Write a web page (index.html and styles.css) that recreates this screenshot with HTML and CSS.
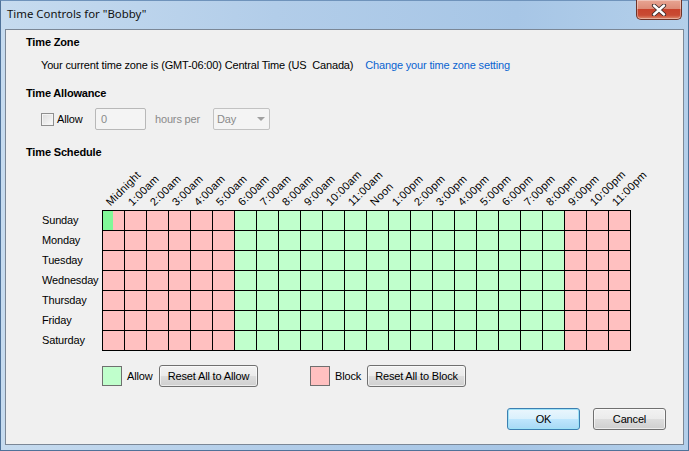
FILE: index.html
```html
<!DOCTYPE html>
<html>
<head>
<meta charset="utf-8">
<link rel="stylesheet" href="styles.css">
</head>
<body>
<div class="window">
  <div class="titlebar">
    <span class="title">Time Controls for "Bobby"</span>
    <div class="close">
      <svg width="20" height="12" viewBox="0 0 20 12"><path d="M5 1.5 L15 10.5 M15 1.5 L5 10.5" stroke="#3a2a2a" stroke-width="4.2" stroke-linecap="round"/><path d="M5 1.5 L15 10.5 M15 1.5 L5 10.5" stroke="#ffffff" stroke-width="2.4" stroke-linecap="round"/></svg>
    </div>
  </div>
  <div class="panel">
    <div class="heading">Time Zone</div>
    <div class="tzline">Your current time zone is (GMT-06:00) Central Time (US&nbsp; Canada)<a class="link">Change your time zone setting</a></div>
    <div class="heading h2">Time Allowance</div>
    <div class="allowrow">
      <span class="checkbox"></span><span class="allowlbl">Allow</span>
      <span class="numbox">0</span>
      <span class="dim">hours per</span>
      <span class="select">Day<span class="arrow"></span></span>
    </div>
    <div class="heading h3">Time Schedule</div>
    <div class="hours">
      <div class="hc"><span>Midnight</span></div>
      <div class="hc"><span>1:00am</span></div>
      <div class="hc"><span>2:00am</span></div>
      <div class="hc"><span>3:00am</span></div>
      <div class="hc"><span>4:00am</span></div>
      <div class="hc"><span>5:00am</span></div>
      <div class="hc"><span>6:00am</span></div>
      <div class="hc"><span>7:00am</span></div>
      <div class="hc"><span>8:00am</span></div>
      <div class="hc"><span>9:00am</span></div>
      <div class="hc"><span>10:00am</span></div>
      <div class="hc"><span>11:00am</span></div>
      <div class="hc"><span>Noon</span></div>
      <div class="hc"><span>1:00pm</span></div>
      <div class="hc"><span>2:00pm</span></div>
      <div class="hc"><span>3:00pm</span></div>
      <div class="hc"><span>4:00pm</span></div>
      <div class="hc"><span>5:00pm</span></div>
      <div class="hc"><span>6:00pm</span></div>
      <div class="hc"><span>7:00pm</span></div>
      <div class="hc"><span>8:00pm</span></div>
      <div class="hc"><span>9:00pm</span></div>
      <div class="hc"><span>10:00pm</span></div>
      <div class="hc"><span>11:00pm</span></div>
    </div>
    <div class="schedule">
      <div class="days">
        <div>Sunday</div><div>Monday</div><div>Tuesday</div><div>Wednesday</div><div>Thursday</div><div>Friday</div><div>Saturday</div>
      </div>
      <div class="grid">
        <div class="c h"></div><div class="c b"></div><div class="c b"></div><div class="c b"></div><div class="c b"></div><div class="c b"></div><div class="c a"></div><div class="c a"></div><div class="c a"></div><div class="c a"></div><div class="c a"></div><div class="c a"></div><div class="c a"></div><div class="c a"></div><div class="c a"></div><div class="c a"></div><div class="c a"></div><div class="c a"></div><div class="c a"></div><div class="c a"></div><div class="c a"></div><div class="c b"></div><div class="c b"></div><div class="c b"></div>
        <div class="c b"></div><div class="c b"></div><div class="c b"></div><div class="c b"></div><div class="c b"></div><div class="c b"></div><div class="c a"></div><div class="c a"></div><div class="c a"></div><div class="c a"></div><div class="c a"></div><div class="c a"></div><div class="c a"></div><div class="c a"></div><div class="c a"></div><div class="c a"></div><div class="c a"></div><div class="c a"></div><div class="c a"></div><div class="c a"></div><div class="c a"></div><div class="c b"></div><div class="c b"></div><div class="c b"></div>
        <div class="c b"></div><div class="c b"></div><div class="c b"></div><div class="c b"></div><div class="c b"></div><div class="c b"></div><div class="c a"></div><div class="c a"></div><div class="c a"></div><div class="c a"></div><div class="c a"></div><div class="c a"></div><div class="c a"></div><div class="c a"></div><div class="c a"></div><div class="c a"></div><div class="c a"></div><div class="c a"></div><div class="c a"></div><div class="c a"></div><div class="c a"></div><div class="c b"></div><div class="c b"></div><div class="c b"></div>
        <div class="c b"></div><div class="c b"></div><div class="c b"></div><div class="c b"></div><div class="c b"></div><div class="c b"></div><div class="c a"></div><div class="c a"></div><div class="c a"></div><div class="c a"></div><div class="c a"></div><div class="c a"></div><div class="c a"></div><div class="c a"></div><div class="c a"></div><div class="c a"></div><div class="c a"></div><div class="c a"></div><div class="c a"></div><div class="c a"></div><div class="c a"></div><div class="c b"></div><div class="c b"></div><div class="c b"></div>
        <div class="c b"></div><div class="c b"></div><div class="c b"></div><div class="c b"></div><div class="c b"></div><div class="c b"></div><div class="c a"></div><div class="c a"></div><div class="c a"></div><div class="c a"></div><div class="c a"></div><div class="c a"></div><div class="c a"></div><div class="c a"></div><div class="c a"></div><div class="c a"></div><div class="c a"></div><div class="c a"></div><div class="c a"></div><div class="c a"></div><div class="c a"></div><div class="c b"></div><div class="c b"></div><div class="c b"></div>
        <div class="c b"></div><div class="c b"></div><div class="c b"></div><div class="c b"></div><div class="c b"></div><div class="c b"></div><div class="c a"></div><div class="c a"></div><div class="c a"></div><div class="c a"></div><div class="c a"></div><div class="c a"></div><div class="c a"></div><div class="c a"></div><div class="c a"></div><div class="c a"></div><div class="c a"></div><div class="c a"></div><div class="c a"></div><div class="c a"></div><div class="c a"></div><div class="c b"></div><div class="c b"></div><div class="c b"></div>
        <div class="c b"></div><div class="c b"></div><div class="c b"></div><div class="c b"></div><div class="c b"></div><div class="c b"></div><div class="c a"></div><div class="c a"></div><div class="c a"></div><div class="c a"></div><div class="c a"></div><div class="c a"></div><div class="c a"></div><div class="c a"></div><div class="c a"></div><div class="c a"></div><div class="c a"></div><div class="c a"></div><div class="c a"></div><div class="c a"></div><div class="c a"></div><div class="c b"></div><div class="c b"></div><div class="c b"></div>
      </div>
    </div>
    <div class="legend">
      <span class="swatch sa"></span><span class="lg">Allow</span><span class="btn reset1">Reset All to Allow</span>
      <span class="swatch sb"></span><span class="lg">Block</span><span class="btn reset2">Reset All to Block</span>
    </div>
    <div class="footer">
      <span class="btn dlg ok">OK</span>
      <span class="btn dlg">Cancel</span>
    </div>
  </div>
</div>
</body>
</html>
```
FILE: styles.css
```css
* { box-sizing: border-box; }
html, body { margin: 0; padding: 0; }
body {
  width: 689px; height: 451px; overflow: hidden;
  font-family: "Liberation Sans", Arial, sans-serif;
  font-size: 11px; color: #000;
  letter-spacing: -0.16px;
  background: #9dbde0;
}
.window {
  width: 689px; height: 451px;
  display: flex; flex-direction: column;
  padding: 0 4px 5px 4px;
  border: 1px solid #4f7299;
  border-top-color: #6f93bb;
  background: linear-gradient(to right, #c6dbef 0%, #b2cde9 40%, #a7c6e6 75%, #b3cfea 100%);
}
.titlebar {
  height: 28px; flex: none;
  display: flex; align-items: flex-start; justify-content: space-between;
}
.title {
  font-family: "Noto Sans", "Liberation Sans", sans-serif;
  font-size: 11.4px; letter-spacing: 0; margin: 5px 0 0 2px; color: #111;
}
.close {
  width: 46px; height: 20px; margin-top: -1px; margin-right: 2px;
  border: 1px solid #6e3328; border-top: none;
  border-radius: 0 0 5px 5px;
  background: linear-gradient(to bottom, #e8a593 0%, #dd8c78 45%, #c8432c 50%, #c94b33 80%, #df8c6e 100%);
  display: flex; align-items: center; justify-content: center;
  box-shadow: inset 0 0 0 1px rgba(255,255,255,0.35);
}
.panel {
  flex: 1;
  display: flex; flex-direction: column;
  background: #f0f0f0;
  border: 1px solid #7b8796;
  padding: 5px 17px 0 20px;
}
.heading { font-weight: bold; line-height: 14px; height: 14px; }
.h2 { margin-top: 14px; }
.h3 { margin-top: 15px; }
.tzline { margin-top: 9px; padding-left: 15px; line-height: 14px; }
.link { color: #0a64d0; margin-left: 12px; }
.allowrow {
  margin-top: 8px; padding-left: 15px; height: 22px;
  display: flex; align-items: center;
}
.checkbox {
  width: 13px; height: 13px; border: 1px solid #8f8f8f;
  background: linear-gradient(135deg, #dcdcdc, #fbfbfb);
  box-shadow: inset 0 0 0 1px #f4f4f4;
}
.allowlbl { margin-left: 3px; width: 38px; }
.numbox {
  width: 51px; height: 22px;
  border: 1px solid #b8b8b8; border-radius: 2px;
  background: #f4f4f4; color: #8a8a8a;
  padding-left: 5px; line-height: 20px;
}
.dim { color: #8a8a8a; margin-left: 9px; width: 58px; }
.select {
  width: 57px; height: 22px;
  border: 1px solid #c2c2c2; border-radius: 2px;
  background: #f4f4f4; color: #8a8a8a;
  padding-left: 3px; line-height: 20px;
  display: flex; justify-content: space-between; align-items: center;
}
.arrow {
  width: 0; height: 0; margin-right: 4px;
  border-left: 4px solid transparent; border-right: 4px solid transparent;
  border-top: 4px solid #a0a0a0;
}
.hours {
  height: 51px; flex: none;
  display: flex; padding-left: 76px;
}
.hc {
  width: 22px; flex: none;
  display: flex; align-items: flex-end;
}
.hc span {
  display: block; white-space: nowrap;
  margin-left: 10px; margin-bottom: 2px;
  line-height: 12px; letter-spacing: 0.25px;
  transform: rotate(-45deg); transform-origin: 0 100%;
}
.schedule { display: flex; padding-left: 16px; }
.days { width: 60px; padding-top: 0; }
.days div { height: 20px; line-height: 20px; }
.grid {
  display: grid;
  grid-template-columns: repeat(24, 21px);
  grid-auto-rows: 19px;
  gap: 1px; padding: 1px;
  background: #000;
}
.c.a { background: #c0ffcc; }
.c.b { background: #ffc0c0; }
.c.h { background: linear-gradient(to right, #80f898 0, #80f898 10px, #ffc0c0 10px); }
.legend {
  margin-top: 14px; padding-left: 76px;
  display: flex; align-items: center; height: 22px;
}
.swatch { width: 20px; height: 20px; border: 1px solid #6f6f6f; }
.sa { background: #c0ffcc; }
.sb { background: #ffc0c0; margin-left: 52px; }
.lg { margin-left: 5px; width: 32px; }
.btn {
  display: flex; align-items: center; justify-content: center;
  height: 22px;
  border: 1px solid #707070; border-radius: 3px;
  background: linear-gradient(to bottom, #f2f2f2 0%, #ebebeb 50%, #dddddd 51%, #cfcfcf 100%);
  box-shadow: inset 0 0 0 1px rgba(255,255,255,0.6);
}
.reset1 { width: 99px; }
.reset2 { width: 99px; }
.footer {
  margin-top: 21px;
  display: flex; justify-content: flex-end; gap: 13px;
}
.dlg { width: 73px; }
.ok {
  border-color: #3c7fb1;
  background: linear-gradient(to bottom, #eaf6fd 0%, #d9f0fc 50%, #bee6fd 51%, #a7d9f5 100%);
  box-shadow: inset 0 0 0 1px #9ee2f7;
}
```
